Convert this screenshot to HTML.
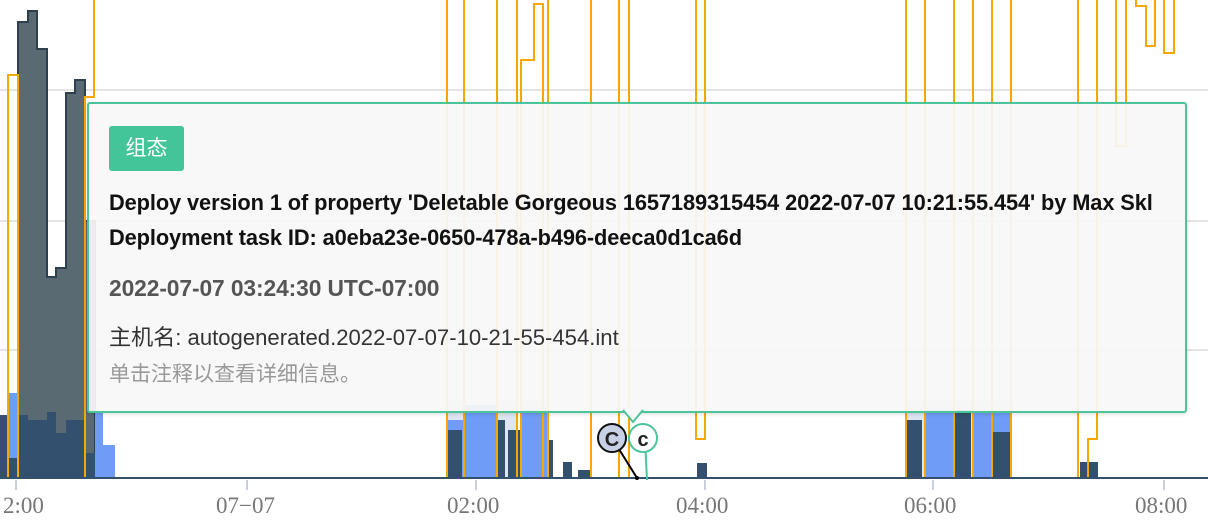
<!DOCTYPE html>
<html><head><meta charset="utf-8"><style>
html,body{margin:0;padding:0;background:#fff;width:1208px;height:525px;overflow:hidden;font-family:"Liberation Sans","Noto Sans CJK SC",sans-serif}
svg{position:absolute;left:0;top:0}
.tt{position:absolute;left:87px;top:102px;width:1096px;height:307px;border:2px solid #4cc499;border-radius:3px;background:rgba(247,247,247,0.93);box-shadow:0 1px 4px rgba(0,0,0,.15)}
.badge{position:absolute;left:20px;top:22px;width:75px;height:45px;background:#43c499;border-radius:3px;color:#fff;font-size:21px;line-height:45px;text-align:center}
.t{position:absolute;left:20px;white-space:nowrap}
.b{font-weight:bold;font-size:21.8px;color:#111;letter-spacing:-0.1px}
.ax{position:absolute;top:493px;font-family:"Liberation Serif",serif;font-size:23px;color:#777}
</style></head><body>
<svg width="1208" height="525">
<g stroke="#e4e4e4" stroke-width="2"><line x1="0" y1="90" x2="1208" y2="90"/><line x1="0" y1="221" x2="1208" y2="221"/><line x1="0" y1="350" x2="1208" y2="350"/></g>
<path d="M18 478V22H28V11H37V49H47V277H56V268H66V93H75V80H85V221H95V478Z" fill="#5a6a73" stroke="#2e3f4d" stroke-width="2"/>
<path d="M8 478V393H18V478ZM95 478V412H103V445H115V478Z" fill="#6e9cf7"/>
<path d="M0 478V415H8V458H17V415H28V420H47V412H56V433H66V420H85V453H95V478Z" fill="#34506f"/>
<path d="M447 478V400H464V478ZM497 478V400H517V478ZM521 478V400H548V478ZM906 478V400H1011V478Z" fill="#dde5f2"/>
<path d="M447 478V420H464V478ZM464 478V405H497V478ZM521 478V410H548V478ZM925 478V410H954V478ZM973 478V412H1011V478Z" fill="#6e9cf7"/>
<path d="M447 478V430H462V478ZM497 478V420H505V478ZM508 478V430H521V478ZM548 478V440H553V478ZM563 478V462H572V478ZM697 478V463H707V478ZM906 478V420H922V478ZM954 478V410H971V478ZM992 478V432H1011V478ZM1080 478V462H1098V478ZM578 478V470H590V478Z" fill="#34506f"/>
<g fill="none" stroke="#f5a800" stroke-width="2">
<path d="M0 478H8V75H18V478H85V97H94V0"/>
<path d="M447 478V0M464 478V0M497 478V0M517 478V0M521 478V60H534V4H543V478M548 478V0M591 478V0M619 478V0M629 478V0M696 0V439H705V0M906 478V0M925 478V0M954 478V0M973 478V0M992 478V0M1011 478V0M1078 478V0M1097 0V439H1088V478M1116 0V146H1126V0M1136 0V6H1146V46H1155V0M1164 0V53H1174V0"/>
</g>
<line x1="0" y1="478" x2="1208" y2="478" stroke="#34506f" stroke-width="2"/>
<g stroke="#c8d0dc" stroke-width="2"><line x1="16" y1="480" x2="16" y2="490"/><line x1="247" y1="480" x2="247" y2="490"/><line x1="476" y1="480" x2="476" y2="490"/><line x1="705" y1="480" x2="705" y2="490"/><line x1="933" y1="480" x2="933" y2="490"/><line x1="1164" y1="480" x2="1164" y2="490"/></g>
<line x1="612" y1="438" x2="637" y2="478" stroke="#000" stroke-width="2"/>
<circle cx="637" cy="478" r="2" fill="#000"/>
<line x1="645" y1="440" x2="647" y2="480" stroke="#4cc499" stroke-width="2"/>
<circle cx="612" cy="438" r="14" fill="#c8d0e6" stroke="#111" stroke-width="2"/>
<text x="612" y="446" font-family="Liberation Sans" font-weight="bold" font-size="20" text-anchor="middle" fill="#222">C</text>
<circle cx="643" cy="438" r="14" fill="#fff" stroke="#4cc499" stroke-width="2"/>
<text x="643" y="446" font-family="Liberation Sans" font-weight="bold" font-size="20" text-anchor="middle" fill="#222">c</text>
</svg>
<div class="tt">
<div class="badge">组态</div>
<div class="t b" style="top:86px">Deploy version 1 of property 'Deletable Gorgeous 1657189315454 2022-07-07 10:21:55.454' by Max Skl</div>
<div class="t b" style="top:121px">Deployment task ID: a0eba23e-0650-478a-b496-deeca0d1ca6d</div>
<div class="t b" style="top:171px;color:#555;font-size:22.8px">2022-07-07 03:24:30 UTC-07:00</div>
<div class="t" style="top:216px;font-size:22.1px;color:#333">主机名: autogenerated.2022-07-07-10-21-55-454.int</div>
<div class="t" style="top:254px;font-size:21px;color:#999">单击注释以查看详细信息。</div>
</div>
<svg width="1208" height="525" style="pointer-events:none"><path d="M623 410L633 422L643 410" fill="#f7f7f7" stroke="#4cc499" stroke-width="2"/><rect x="624" y="407" width="18" height="3" fill="#f7f7f7"/></svg>
<div class="ax" style="left:3px">2:00</div>
<div class="ax" style="left:216px">07−07</div>
<div class="ax" style="left:447px">02:00</div>
<div class="ax" style="left:676px">04:00</div>
<div class="ax" style="left:904px">06:00</div>
<div class="ax" style="left:1135px">08:00</div>
</body></html>
